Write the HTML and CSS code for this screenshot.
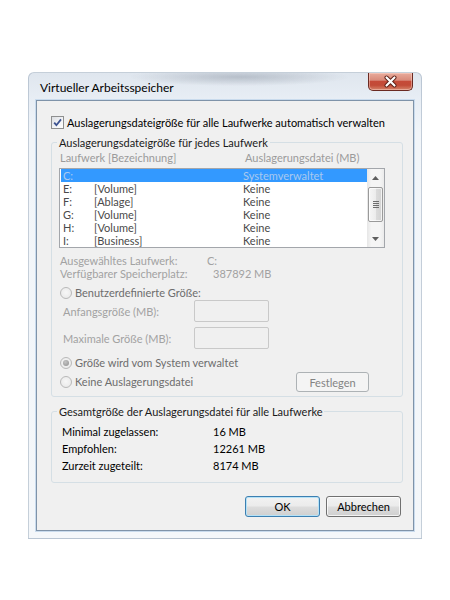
FILE: index.html
```html
<!DOCTYPE html>
<html lang="de">
<head>
<meta charset="utf-8">
<title>Virtueller Arbeitsspeicher</title>
<link rel="stylesheet" href="styles.css">
</head>
<body>
<div class="window">
  <div class="titlebar">
    <span class="title">Virtueller Arbeitsspeicher</span>
    <div class="close">
      <svg width="15" height="13" viewBox="0 0 15 13">
        <path d="M3.5 2.5 L11.5 10.5 M11.5 2.5 L3.5 10.5" stroke="#5a1d14" stroke-width="4" stroke-linecap="round"/>
        <path d="M3.5 2.5 L11.5 10.5 M11.5 2.5 L3.5 10.5" stroke="#ffffff" stroke-width="2.2" stroke-linecap="round"/>
      </svg>
    </div>
  </div>
  <div class="client">
    <div class="check-row">
      <span class="checkbox">
        <svg width="11" height="11" viewBox="0 0 11 11"><path d="M2.2 5.6 L4.4 8.2 L9 2.4" fill="none" stroke="#3d5391" stroke-width="1.8"/></svg>
      </span>
      <span>Auslagerungsdateigröße für alle Laufwerke automatisch verwalten</span>
    </div>

    <fieldset class="group g1">
      <legend>Auslagerungsdateigröße für jedes Laufwerk</legend>
      <div class="colheads"><span class="ch1">Laufwerk [Bezeichnung]</span><span>Auslagerungsdatei (MB)</span></div>
      <div class="listbox">
        <div class="rows">
          <div class="row sel"><span class="drv">C:</span><span class="lbl"></span><span>Systemverwaltet</span></div>
          <div class="row"><span class="drv">E:</span><span class="lbl">[Volume]</span><span>Keine</span></div>
          <div class="row"><span class="drv">F:</span><span class="lbl">[Ablage]</span><span>Keine</span></div>
          <div class="row"><span class="drv">G:</span><span class="lbl">[Volume]</span><span>Keine</span></div>
          <div class="row"><span class="drv">H:</span><span class="lbl">[Volume]</span><span>Keine</span></div>
          <div class="row"><span class="drv">I:</span><span class="lbl">[Business]</span><span>Keine</span></div>
        </div>
        <div class="scrollbar">
          <div class="sb-arrow"><svg width="7" height="4" viewBox="0 0 7 4"><path d="M0 4 L3.5 0 L7 4 Z" fill="#5f5f5f"/></svg></div>
          <div class="sb-thumb"><span class="grip"></span></div>
          <div class="sb-track"></div>
          <div class="sb-arrow"><svg width="7" height="4" viewBox="0 0 7 4"><path d="M0 0 L7 0 L3.5 4 Z" fill="#5f5f5f"/></svg></div>
        </div>
      </div>
      <div class="info">
        <span>Ausgewähltes Laufwerk:</span><span>C:</span>
        <span>Verfügbarer Speicherplatz:</span><span class="shift">387892 MB</span>
      </div>
      <div class="radio-row r1"><span class="radio"></span><span>Benutzerdefinierte Größe:</span></div>
      <div class="field-row"><span class="flabel">Anfangsgröße (MB):</span><span class="textbox"></span></div>
      <div class="field-row f2"><span class="flabel">Maximale Größe (MB):</span><span class="textbox"></span></div>
      <div class="radio-row r2"><span class="radio on"></span><span>Größe wird vom System verwaltet</span></div>
      <div class="radio-row r3"><span class="radio"></span><span>Keine Auslagerungsdatei</span><button class="btn disabled" type="button">Festlegen</button></div>
    </fieldset>

    <fieldset class="group g2">
      <legend>Gesamtgröße der Auslagerungsdatei für alle Laufwerke</legend>
      <div class="totals">
        <span>Minimal zugelassen:</span><span>16 MB</span>
        <span>Empfohlen:</span><span>12261 MB</span>
        <span>Zurzeit zugeteilt:</span><span>8174 MB</span>
      </div>
    </fieldset>

    <div class="buttons">
      <button class="btn default" type="button">OK</button>
      <button class="btn" type="button">Abbrechen</button>
    </div>
  </div>
</div>
</body>
</html>
```

FILE: styles.css
```css
* { box-sizing: border-box; }
html, body { margin: 0; padding: 0; background: #ffffff; }
body {
  width: 450px;
  height: 600px;
  padding: 72px 0 0 28px;
  font-family: "Lato", "Open Sans", sans-serif;
  font-size: 11px;
  color: #000;
  overflow: hidden;
}

.window {
  width: 394px;
  padding: 0 7px 7px 7px;
  border: 1px solid rgba(140, 158, 178, 0.45);
  border-radius: 6px 6px 0 0;
  background:
    radial-gradient(ellipse 110px 9px at 210px 4px, rgba(120, 130, 145, 0.4), rgba(120, 130, 145, 0) 100%),
    linear-gradient(180deg, #dfe6ee 0px, #e8eef5 27px, #f1f5f9 60px, #f4f7fa 100%);
}

.titlebar {
  display: flex;
  align-items: flex-start;
  height: 27px;
}
.title {
  margin: 7px 0 0 4px;
  line-height: 16px;
  font-size: 12px;
  color: #000;
}
.close {
  margin-left: auto;
  margin-right: 1px;
  width: 45px;
  height: 18px;
  border: 1px solid #6a2a22;
  border-top: none;
  border-radius: 0 0 5px 5px;
  background: linear-gradient(180deg, #e9ab9c 0%, #d98b7b 42%, #c54a38 50%, #c24b37 72%, #d6856b 100%);
  box-shadow: inset 0 0 0 1px rgba(255, 220, 210, 0.45);
  display: flex;
  align-items: center;
  justify-content: center;
}

.client {
  border: 1px solid #7f93a9;
  box-shadow: 0 0 0 1px #c9dbed;
  background: #f0f0f0;
  padding: 14px 10px 13px 14px;
}

.check-row {
  display: flex;
  align-items: center;
  gap: 2px;
  height: 15px;
  line-height: 15px;
  white-space: nowrap;
}
.checkbox {
  width: 13px;
  height: 13px;
  border: 1px solid #8e8f8f;
  background: linear-gradient(135deg, #dcdee2 0%, #f4f5f7 60%, #ffffff 100%);
  display: flex;
  align-items: center;
  justify-content: center;
  flex: none;
  margin-right: 1px;
}

.group {
  margin: 0;
  border: 1px solid #d5dfe5;
  border-radius: 3px;
  min-width: 0;
}
.group legend {
  padding: 0 2px;
  margin-left: -3px;
  line-height: 15px;
  color: #1a1a1a;
}
.g1 {
  margin-top: 5px;
  padding: 0 8px 4px 8px;
}

.colheads {
  display: flex;
  line-height: 15px;
  color: #9b9b9b;
}
.ch1 { width: 185px; }

.listbox {
  margin: 3px 0 0 -1px;
  width: 326px;
  height: 80px;
  border: 1px solid #a3a6ab;
  background: #fff;
  display: flex;
}
.rows {
  flex: 1;
  padding-left: 1px;
}
.row {
  display: flex;
  align-items: center;
  height: 13px;
  line-height: 12px;
  color: #4a4a4a;
  white-space: nowrap;
}
.row.sel {
  background: #3399ff;
  color: #a9c9ef;
}
.drv { width: 33px; padding-left: 2px; }
.lbl { width: 149px; }

.scrollbar {
  width: 17px;
  display: flex;
  flex-direction: column;
  background: linear-gradient(90deg, #e6e6e6 0%, #f5f5f5 25%, #f5f5f5 75%, #ebebeb 100%);
}
.sb-arrow {
  height: 17px;
  display: flex;
  align-items: center;
  justify-content: center;
}
.sb-thumb {
  margin: 1px 1px 0 1px;
  height: 35px;
  border: 1px solid #9a9a9a;
  border-radius: 2px;
  background: linear-gradient(90deg, #f6f6f6 0%, #ececec 50%, #dcdcdc 51%, #d2d2d2 100%);
  box-shadow: inset 0 0 0 1px rgba(255, 255, 255, 0.7);
  display: flex;
  align-items: center;
  justify-content: center;
}
.grip {
  width: 6px;
  height: 7px;
  background: repeating-linear-gradient(180deg, #6d6d6d 0px, #6d6d6d 1px, transparent 1px, transparent 2px);
}
.sb-track { flex: 1; }

.info {
  margin-top: 6px;
  display: grid;
  grid-template-columns: 147px auto;
  line-height: 13px;
  color: #a2a2a2;
}
.shift { margin-left: 6px; }

.radio-row {
  display: flex;
  align-items: center;
  gap: 3px;
  color: #6d6d6d;
  line-height: 14px;
}
.r1 { margin-top: 6px; height: 14px; }
.r2 { margin-top: 7px; height: 14px; }
.r3 { margin-top: 2px; height: 20px; }
.radio {
  width: 12px;
  height: 12px;
  border-radius: 50%;
  border: 1px solid #b9b9b9;
  background: radial-gradient(circle at 50% 45%, #f7f7f7 0%, #e6e6e6 100%);
  flex: none;
  display: flex;
  align-items: center;
  justify-content: center;
}
.radio.on::after {
  content: "";
  width: 6px;
  height: 6px;
  border-radius: 50%;
  background: radial-gradient(circle at 40% 35%, #c4c4c4 0%, #8e8e8e 100%);
}

.field-row {
  display: flex;
  align-items: center;
  height: 22px;
  color: #a2a2a2;
}
.f2 { margin-top: 5px; }
.flabel { width: 134px; padding-left: 3px; }
.textbox {
  width: 75px;
  height: 22px;
  border: 1px solid #c9c9c9;
  border-radius: 2px;
  background: #f0f0f0;
}

.btn {
  width: 75px;
  height: 21px;
  padding: 0;
  font-family: inherit;
  font-size: 11px;
  color: #000;
  border: 1px solid #707070;
  border-radius: 3px;
  background: linear-gradient(180deg, #f2f2f2 0%, #ebebeb 48%, #dddddd 52%, #cfcfcf 100%);
  box-shadow: inset 0 0 0 1px rgba(255, 255, 255, 0.75);
}
.btn.disabled {
  width: 73px;
  height: 20px;
  margin-left: auto;
  margin-right: 25px;
  border-color: #adb2b5;
  background: #f4f4f4;
  box-shadow: none;
  color: #838383;
}
.btn.default {
  border-color: #3c7fb1;
  box-shadow: inset 0 0 0 1px #b5e2f7;
}

.g2 {
  margin-top: 7px;
  padding: 4px 8px 8px 10px;
}
.g2 legend { margin-left: -5px; }
.totals {
  display: grid;
  grid-template-columns: 151px auto;
  line-height: 17px;
}

.buttons {
  margin-top: 13px;
  margin-right: 2px;
  display: flex;
  justify-content: flex-end;
  gap: 6px;
}
```
